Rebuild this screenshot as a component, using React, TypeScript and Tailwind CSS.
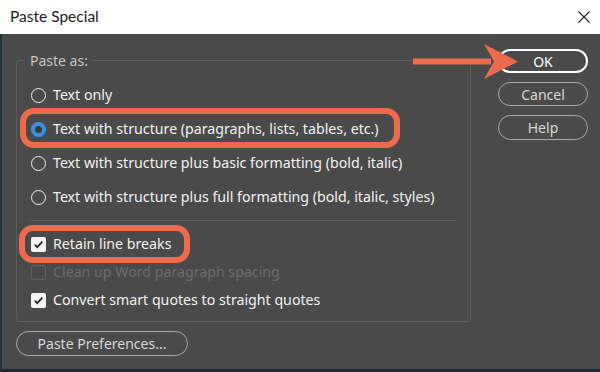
import React from "react"

const font = { fontFamily: '"Noto Sans", "Open Sans", sans-serif' }

function Radio({ checked }: { checked?: boolean }) {
  if (checked) {
    return <span className="w-[15px] h-[15px] rounded-full border-[4px] border-[#3b8fe3] bg-[#3a3a3a] shrink-0" />
  }
  return <span className="w-[15px] h-[15px] rounded-full border-[1.5px] border-[#f0f0f0] shrink-0" />
}

function Check({ checked, disabled }: { checked?: boolean; disabled?: boolean }) {
  if (disabled) {
    return <span className="w-[15px] h-[15px] rounded-[2px] border border-[#5f5f5f] shrink-0" />
  }
  return (
    <span className="w-[15px] h-[15px] rounded-[2px] bg-[#f4f4f4] flex items-center justify-center shrink-0">
      {checked && (
        <svg width="11" height="11" viewBox="0 0 11 11">
          <path d="M1.8 5.6 L4.3 8.1 L9.3 2.6" fill="none" stroke="#2b2b2b" strokeWidth="1.8" />
        </svg>
      )}
    </span>
  )
}

const radios = [
  { label: "Text only" },
  { label: "Text with structure (paragraphs, lists, tables, etc.)", checked: true },
  { label: "Text with structure plus basic formatting (bold, italic)" },
  { label: "Text with structure plus full formatting (bold, italic, styles)" },
]

const checks = [
  { label: "Retain line breaks", checked: true },
  { label: "Clean up Word paragraph spacing", disabled: true },
  { label: "Convert smart quotes to straight quotes", checked: true },
]

export default function App() {
  return (
    <div className="relative w-[600px] h-[372px] flex flex-col bg-[#4a4a4a] overflow-hidden" style={font}>
      {/* title bar */}
      <div className="h-[34px] bg-white flex items-center justify-between pl-[10px] pr-[10px] shrink-0">
        <span className="text-[15.5px] text-[#1a1a1a]" style={{ fontFamily: "Lato, sans-serif" }}>
          Paste Special
        </span>
        <svg width="12" height="12" viewBox="0 0 12 12">
          <path d="M0.5 0.5 L11.5 11.5 M11.5 0.5 L0.5 11.5" stroke="#222" strokeWidth="1.1" />
        </svg>
      </div>

      {/* body */}
      <div className="flex-1 flex border-l-2 border-l-[#24323a] border-b-[3px] border-b-[#1c2a30]">
        <div className="flex flex-col ml-[14px]">
          <div className="relative mt-[26px] w-[455px] h-[262px] border border-[#5d5d5d] rounded-[3px] pt-[17px]">
            <span className="absolute -top-[11px] left-[8px] px-[5px] bg-[#4a4a4a] text-[14px] text-[#c4c4c4]">
              Paste as:
            </span>
            {radios.map((r, i) => (
              <div key={i} className="h-[34px] flex items-center gap-[7px] pl-[14px] text-[14.2px] text-[#f2f2f2]">
                <Radio checked={r.checked} />
                <span>{r.label}</span>
              </div>
            ))}
            <div className="mt-[6px] mx-[13px] h-px bg-[#5d5d5d]" />
            <div className="mt-[9px]">
              {checks.map((c, i) => (
                <div
                  key={i}
                  className={`h-[28px] flex items-center gap-[7px] pl-[14px] text-[14.2px] ${
                    c.disabled ? "text-[#6b6b6b]" : "text-[#f2f2f2]"
                  }`}
                >
                  <Check checked={c.checked} disabled={c.disabled} />
                  <span>{c.label}</span>
                </div>
              ))}
            </div>
          </div>
          <button className="mt-[9px] w-[172px] h-[25px] rounded-full border border-[#a8a8a8] text-[14px] text-[#d8d8d8] flex items-center justify-center">
            Paste Preferences...
          </button>
        </div>

        <div className="flex flex-col gap-[9px] ml-[27px] mt-[15px]">
          <button className="w-[90px] h-[24px] rounded-full border-2 border-white text-[14px] text-white flex items-center justify-center">
            OK
          </button>
          <button className="w-[90px] h-[24px] rounded-full border border-[#a8a8a8] text-[14px] text-[#d8d8d8] flex items-center justify-center">
            Cancel
          </button>
          <button className="w-[90px] h-[25px] rounded-full border border-[#a8a8a8] text-[14px] text-[#d8d8d8] flex items-center justify-center">
            Help
          </button>
        </div>
      </div>

      {/* annotation overlays */}
      <div className="absolute left-[20px] top-[108px] w-[380px] h-[40px] border-[6px] border-[#ee6a4c] rounded-[14px] pointer-events-none" />
      <div className="absolute left-[19px] top-[225px] w-[171px] h-[38px] border-[6px] border-[#ee6a4c] rounded-[14px] pointer-events-none" />
      <svg className="absolute left-0 top-0 pointer-events-none" width="600" height="372" viewBox="0 0 600 372">
        <rect x="413" y="58.5" width="78" height="6" fill="#ee6a4c" />
        <path d="M518 61.5 L484 44 L494 61.5 L484 79 Z" fill="#ee6a4c" />
      </svg>
    </div>
  )
}
